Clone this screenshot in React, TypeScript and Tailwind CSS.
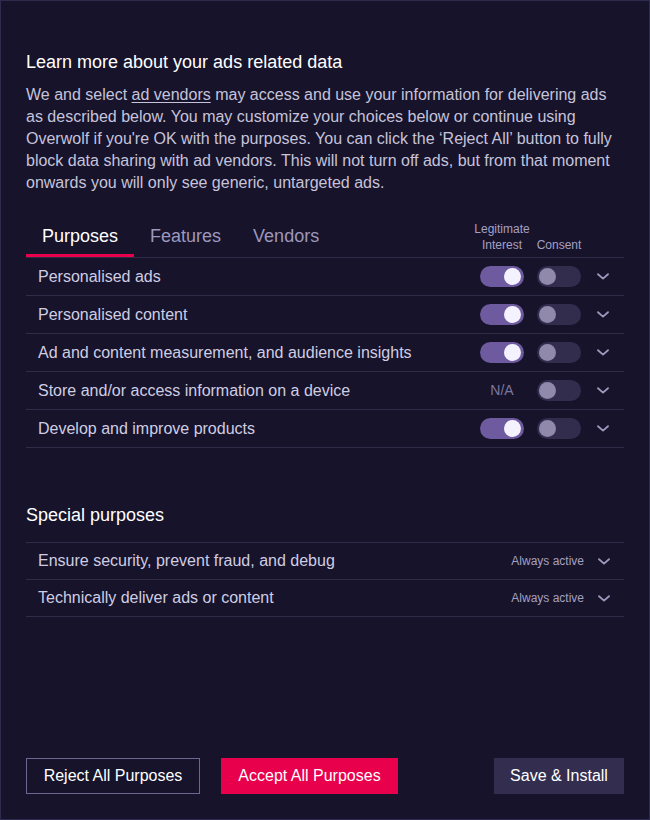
import { useState } from 'react'

type Purpose = { label: string; legit: boolean | null; consent: boolean }

const purposes: Purpose[] = [
  { label: 'Personalised ads', legit: true, consent: false },
  { label: 'Personalised content', legit: true, consent: false },
  { label: 'Ad and content measurement, and audience insights', legit: true, consent: false },
  { label: 'Store and/or access information on a device', legit: null, consent: false },
  { label: 'Develop and improve products', legit: true, consent: false },
]

const specialPurposes = [
  'Ensure security, prevent fraud, and debug',
  'Technically deliver ads or content',
]

function Chevron() {
  return (
    <svg width="12" height="7" viewBox="0 0 12 7" fill="none" className="text-[#9d98bd]">
      <path d="M1 1.2L6 5.6L11 1.2" stroke="currentColor" strokeWidth="1.8" strokeLinecap="round" strokeLinejoin="round" />
    </svg>
  )
}

function Toggle({ on }: { on: boolean }) {
  return (
    <div
      className={`w-[44px] h-[21px] rounded-full flex items-center ${
        on ? 'bg-[#6e5a9e] justify-end px-[3px]' : 'bg-[#332d4d] justify-start px-[2px]'
      }`}
    >
      <div className={`w-[17px] h-[17px] rounded-full ${on ? 'bg-[#f4f2ff]' : 'bg-[#9089ab]'}`} />
    </div>
  )
}

export default function App() {
  const [tab, setTab] = useState('Purposes')
  const tabs = ['Purposes', 'Features', 'Vendors']

  return (
    <div
      className="w-[650px] h-[820px] border border-[#2f2b4f] bg-[#16132a] flex flex-col px-[25px] pt-[49px] pb-[25px]"
      style={{ fontFamily: '"Liberation Sans", Arial, sans-serif' }}
    >
      <h2 className="text-[18px] leading-[24px] text-white">Learn more about your ads related data</h2>
      <p className="mt-[10px] text-[16px] leading-[22px] text-[#c6c3db]">
        We and select <span className="underline underline-offset-2">ad vendors</span> may access and use your
        information for delivering ads as described below. You may customize your choices below or continue using
        Overwolf if you're OK with the purposes. You can click the ‘Reject All’ button to fully block data sharing
        with ad vendors. This will not turn off ads, but from that moment onwards you will only see generic,
        untargeted ads.
      </p>

      {/* Tabs + column labels */}
      <div className="mt-[27px] flex items-end justify-between border-b border-[#2f2b48]">
        <div className="flex">
          {tabs.map(t => (
            <button
              key={t}
              onClick={() => setTab(t)}
              className={`px-4 pb-[6px] text-[18px] leading-[24px] border-b-[3px] ${
                tab === t ? 'text-white border-[#e8004d]' : 'text-[#9d98bd] border-transparent'
              }`}
            >
              {t}
            </button>
          ))}
        </div>
        <div className="flex items-end pb-[4px] text-[12px] leading-[16px] text-[#a5a0c2]">
          <div className="w-[44px] flex flex-col items-center whitespace-nowrap">
            <span>Legitimate</span>
            <span>Interest</span>
          </div>
          <div className="w-[44px] ml-[13px] flex flex-col items-center whitespace-nowrap">
            <span>Consent</span>
          </div>
          <div className="w-[43px]" />
        </div>
      </div>

      {/* Purposes list */}
      <div>
        {purposes.map(p => (
          <div key={p.label} className="h-[38px] flex items-center justify-between pl-3 border-b border-[#2f2b48]">
            <span className="text-[16px] text-[#d0cde3]">{p.label}</span>
            <div className="flex items-center">
              <div className="w-[44px] flex justify-center">
                {p.legit === null ? (
                  <span className="text-[14px] text-[#7c76a0]">N/A</span>
                ) : (
                  <Toggle on={p.legit} />
                )}
              </div>
              <div className="ml-[13px]">
                <Toggle on={p.consent} />
              </div>
              <div className="w-[43px] flex justify-center">
                <Chevron />
              </div>
            </div>
          </div>
        ))}
      </div>

      <h2 className="mt-[55px] text-[18px] leading-[24px] text-white">Special purposes</h2>
      <div className="mt-[15px] border-t border-[#2f2b48]">
        {specialPurposes.map(s => (
          <div key={s} className="h-[37px] flex items-center justify-between pl-3 border-b border-[#2f2b48]">
            <span className="text-[16px] text-[#d0cde3]">{s}</span>
            <div className="flex items-center">
              <span className="text-[12px] text-[#a5a0c2]">Always active</span>
              <div className="w-[40px] flex justify-center">
                <Chevron />
              </div>
            </div>
          </div>
        ))}
      </div>

      {/* Footer buttons */}
      <div className="mt-auto flex items-center">
        <button className="h-[36px] w-[174px] border border-[#6b6790] text-[16px] text-white">Reject All Purposes</button>
        <button className="h-[36px] w-[177px] ml-[21px] bg-[#e8004d] text-[16px] text-white">Accept All Purposes</button>
        <button className="h-[36px] w-[130px] ml-auto bg-[#332e4f] text-[16px] text-white">Save &amp; Install</button>
      </div>
    </div>
  )
}
